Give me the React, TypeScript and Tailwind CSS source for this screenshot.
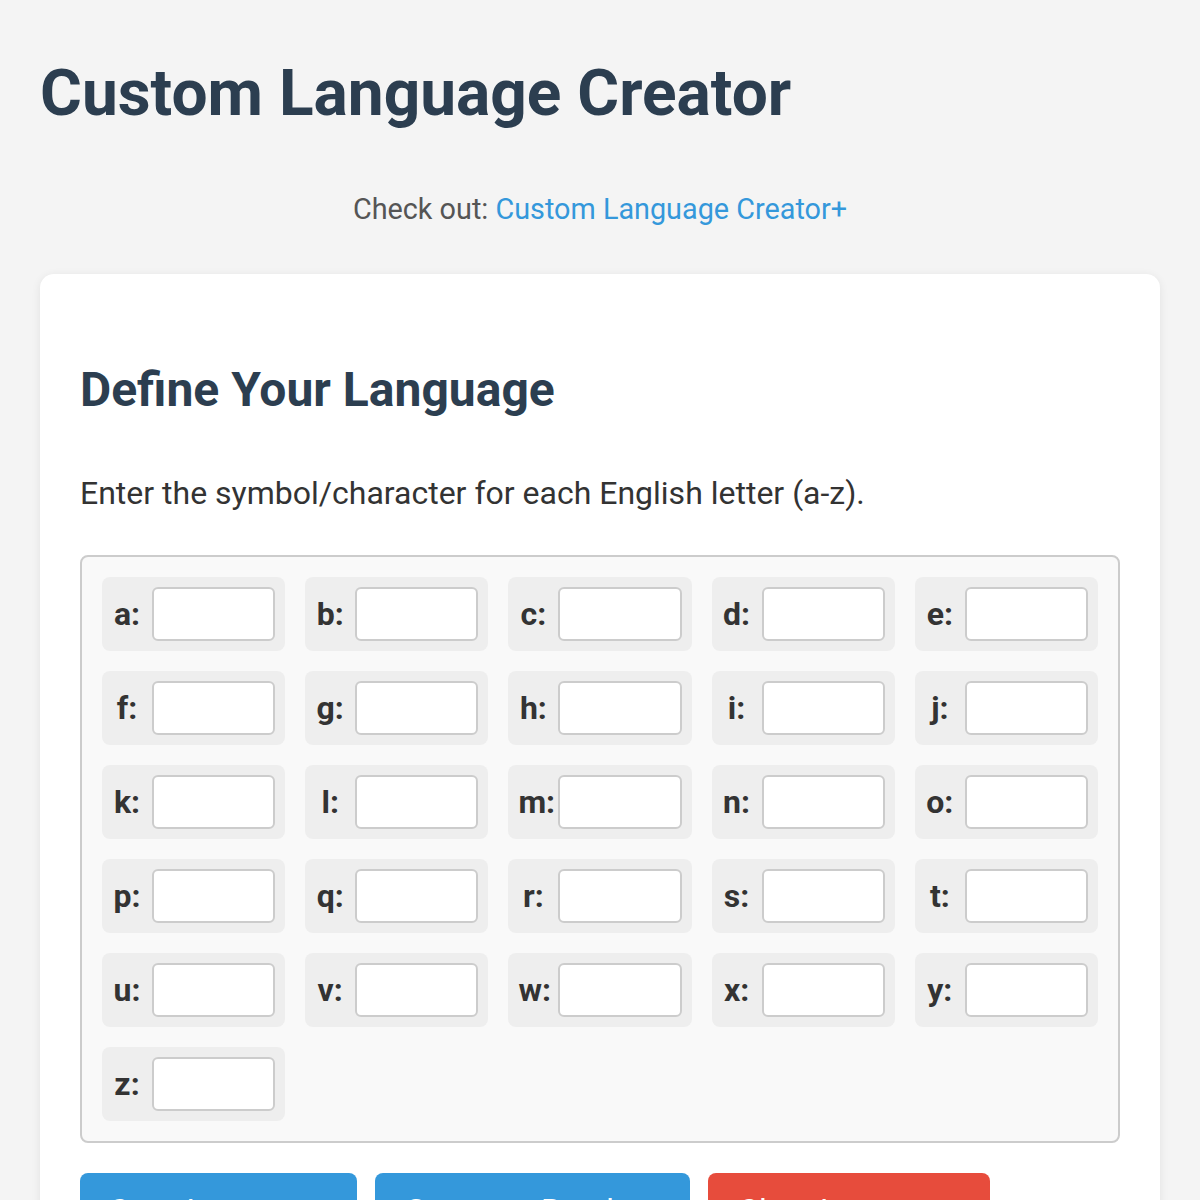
import React from "react";

const LETTERS = "abcdefghijklmnopqrstuvwxyz".split("");

export default function App() {
  return (
    <div className="min-h-screen bg-[#f4f4f4] px-10 font-['Roboto',sans-serif]">
      <h1 className="pt-[62px] text-[64px] font-bold leading-none text-[#2c3e50]">
        Custom Language Creator
      </h1>

      <p className="mt-[69px] text-center text-[28.8px] leading-none text-[#555]">
        Check out: <a href="#" className="text-[#3498db]">Custom Language Creator+</a>
      </p>

      <div className="mt-[50px] rounded-[14px] bg-white p-10 shadow-[0_2px_10px_rgba(0,0,0,0.08)]">
        <h2 className="mt-[52px] text-[48px] font-bold leading-none text-[#2c3e50]">
          Define Your Language
        </h2>
        <p className="mt-[63px] text-[32px] leading-none text-[#333]">
          Enter the symbol/character for each English letter (a-z).
        </p>

        <div className="mt-[46px] grid grid-cols-5 gap-5 rounded-lg border-2 border-[#ccc] bg-[#f9f9f9] p-5">
          {LETTERS.map((l) => (
            <div key={l} className="flex items-center gap-[10px] rounded-lg bg-[#eee] p-[10px]">
              <label className="w-[30px] shrink-0 text-center text-[32px] font-bold leading-none text-[#333] whitespace-nowrap">
                {l}:
              </label>
              <input
                type="text"
                className="h-[54px] min-w-0 flex-1 rounded-md border-2 border-[#ccc] bg-white px-2 text-[28px] outline-none"
              />
            </div>
          ))}
        </div>

        <div className="mt-[30px] flex gap-[18px]">
          <button className="rounded-lg bg-[#3498db] px-[30px] py-[21px] text-[32px] leading-none text-white">
            Save Language
          </button>
          <button className="rounded-lg bg-[#3498db] px-[30px] py-[21px] text-[32px] leading-none text-white">
            Generate Random
          </button>
          <button className="rounded-lg bg-[#e74c3c] px-[30px] py-[21px] text-[32px] leading-none text-white">
            Clear Language
          </button>
        </div>
      </div>
    </div>
  );
}
